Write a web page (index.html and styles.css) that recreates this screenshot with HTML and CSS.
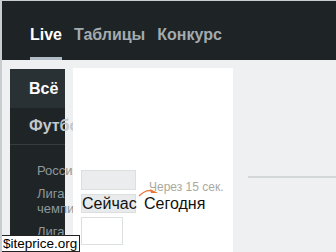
FILE: index.html
```html
<!DOCTYPE html>
<html lang="ru">
<head>
<meta charset="utf-8">
<link rel="stylesheet" href="styles.css">
</head>
<body>
<header class="top">
  <nav class="nav">
    <a class="nav-item active">Live</a>
    <a class="nav-item">Таблицы</a>
    <a class="nav-item">Конкурс</a>
  </nav>
</header>
<div class="main">
  <aside class="side">
    <div class="side-item sel">Всё</div>
    <div class="side-item sport">Футбол</div>
    <ul class="leagues">
      <li>Россия</li>
      <li>Лига чемпионов</li>
      <li>Лига Европы</li>
    </ul>
  </aside>
  <section class="panel">
    <div class="box box-top"></div>
    <div class="row">
      <span class="btn">Сейчас</span>
      <span class="tab">Сегодня</span>
      <span class="timer">Через 15 сек.</span>
      <svg class="arrow" width="24" height="8" viewBox="0 0 24 8"><path d="M1 7 Q8 0 14 2" fill="none" stroke="#e8743a" stroke-width="1.2"/><path d="M12 0 L20 4 L13 4 Z" fill="#e8743a"/></svg>
    </div>
    <div class="box box-bottom"></div>
  </section>
  <div class="right">
    <div class="rule"></div>
  </div>
</div>
<div class="mark">$iteprice.org</div>
</body>
</html>
```
FILE: styles.css
```css
html, body {
  margin: 0;
  padding: 0;
  height: 252px;
  overflow: hidden;
}
body {
  background: #eef0f1;
  border-top: 1px solid #c9cdcf;
  border-left: 2px solid #c9cdcf;
  font-family: "Liberation Sans", Arial, sans-serif;
  position: relative;
  box-sizing: border-box;
}
.top {
  background: #1e2325;
  height: 59px;
  display: flex;
  align-items: flex-end;
}
.nav {
  display: flex;
  gap: 12px;
  padding-left: 28px;
}
.nav-item {
  font-size: 16px;
  font-weight: bold;
  color: #a3abaf;
  padding-top: 13px;
  padding-bottom: 13px;
  border-bottom: 3px solid transparent;
  line-height: 18px;
}
.nav-item.active {
  color: #ffffff;
  border-bottom-color: #b2bcc6;
}
.main {
  display: flex;
  padding-left: 8px;
  padding-top: 8px;
  height: 192px;
  box-sizing: border-box;
  overflow: hidden;
}
.side {
  width: 55px;
  background: #1f2527;
  margin-top: 1px;
  flex: none;
  clip-path: inset(0 -8px 0 0);
}
.side-item {
  font-size: 16px;
  font-weight: bold;
  white-space: nowrap;
  box-sizing: border-box;
  padding-left: 19px;
}
.side-item.sel {
  background: #2a3134;
  color: #ffffff;
  height: 39px;
  line-height: 39px;
}
.side-item.sport {
  color: #c3c8cb;
  height: 37px;
  line-height: 36px;
  border-bottom: 1px solid #353c3f;
}
.leagues {
  list-style: none;
  margin: 0;
  padding: 18px 0 0 27px;
  font-size: 13px;
  line-height: 15px;
  color: #8e979b;
  width: 30px;
}
.leagues li {
  margin-bottom: 8px;
}
.panel {
  width: 160px;
  margin-left: 8px;
  background: #ffffff;
  flex: none;
  position: relative;
  padding: 102px 0 0 8px;
  box-sizing: border-box;
}
.box {
  border: 1px solid #dcdfe0;
  box-sizing: border-box;
}
.box-top {
  width: 55px;
  height: 20px;
  background: #eaeced;
}
.row {
  display: flex;
  align-items: center;
  gap: 8px;
  margin-top: 4px;
  position: relative;
}
.btn {
  background: #e8eaeb;
  border: 1px solid #dcdfe0;
  width: 55px;
  height: 19px;
  box-sizing: border-box;
  font-size: 16px;
  line-height: 17px;
  color: #111111;
}
.tab {
  font-size: 16px;
  line-height: 17px;
  color: #111111;
}
.timer {
  position: absolute;
  left: 68px;
  top: -14px;
  font-size: 12px;
  color: #aaa99e;
  white-space: nowrap;
}
.arrow {
  position: absolute;
  left: 57px;
  top: -5px;
}
.box-bottom {
  width: 42px;
  height: 28px;
  margin-top: 4px;
  background: #ffffff;
}
.right {
  flex: 1;
  padding: 108px 0 0 15px;
}
.rule {
  height: 2px;
  background: #d3d7d8;
}
.mark {
  position: absolute;
  left: -2px;
  bottom: 0;
  background: #ffffff;
  border: 1px solid #222;
  font-family: "Liberation Sans", Arial, sans-serif;
  font-size: 13.5px;
  line-height: 15px;
  padding: 0 2px;
  color: #000;
}
```
